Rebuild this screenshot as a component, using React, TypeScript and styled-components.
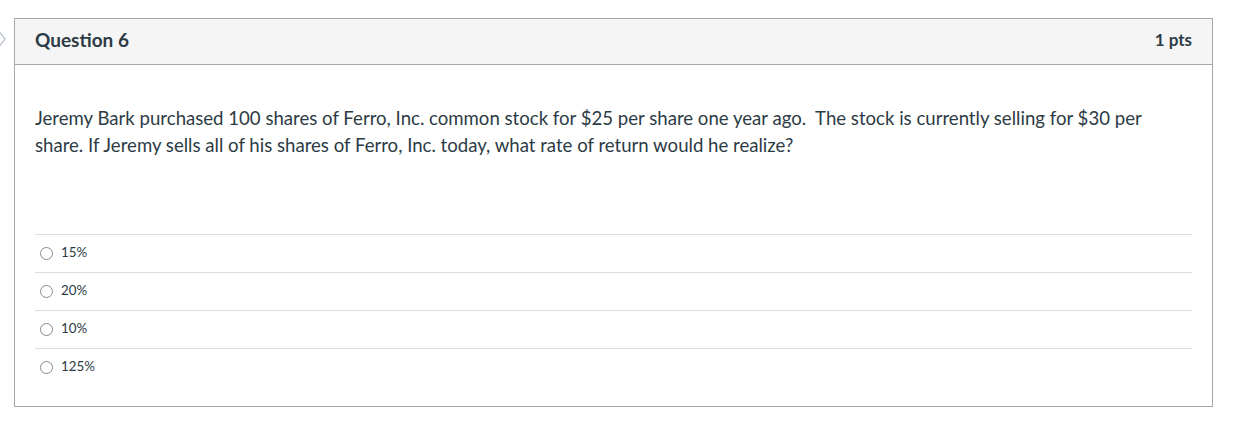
import React from "react";
import styled, { createGlobalStyle } from "styled-components";

const GlobalStyle = createGlobalStyle`
  html, body {
    margin: 0;
    padding: 0;
    background: #ffffff;
    font-family: Lato, "Liberation Sans", sans-serif;
    color: #2d3b45;
  }
`;

const Page = styled.div`
  display: flex;
  align-items: flex-start;
  padding-top: 18px;
  width: 1250px;
`;

const Marker = styled.div`
  width: 14px;
  flex: none;
  padding-top: 14px;
  display: flex;
  svg {
    display: block;
  }
`;

const Card = styled.div`
  width: 1199px;
  box-sizing: border-box;
  border: 1px solid #a8a8a8;
  background: #ffffff;
`;

const Header = styled.div`
  display: flex;
  justify-content: space-between;
  align-items: center;
  height: 46px;
  box-sizing: border-box;
  padding: 0 20px 4px 20px;
  background: #f5f5f5;
  border-bottom: 1px solid #a8a8a8;
`;

const Title = styled.h2`
  margin: 0;
  font-size: 19px;
  font-weight: 700;
  color: #2d3b45;
`;

const Points = styled.span`
  font-size: 17px;
  font-weight: 700;
  color: #2d3b45;
`;

const Body = styled.div`
  padding: 40px 20px 20px 20px;
`;

const QuestionText = styled.p`
  margin: 0 0 75px 0;
  font-size: 18.6px;
  line-height: 27px;
  color: #2d3b45;
`;

const Answers = styled.div`
  display: flex;
  flex-direction: column;
`;

const AnswerRow = styled.label`
  display: flex;
  align-items: center;
  gap: 8px;
  height: 38px;
  box-sizing: border-box;
  border-top: 1px solid #dddddd;
  padding-left: 5px;
  color: #2d3b45;
`;

const AnswerText = styled.span`
  font-size: 13.4px;
  margin-top: -4px;
`;

const Radio = styled.span`
  width: 11px;
  height: 11px;
  border: 1px solid #8a8a8a;
  border-radius: 50%;
  background: #ffffff;
  flex: none;
`;

const answers = ["15%", "20%", "10%", "125%"];

export default function App() {
  return (
    <>
      <GlobalStyle />
      <Page>
        <Marker>
          <svg width="8" height="14" viewBox="0 0 8 14">
            <polyline
              points="0,0.5 5,7 0,13.5"
              fill="none"
              stroke="#a9b6c4"
              strokeWidth="1.2"
            />
          </svg>
        </Marker>
        <Card>
          <Header>
            <Title>Question 6</Title>
            <Points>1 pts</Points>
          </Header>
          <Body>
            <QuestionText>
              Jeremy Bark purchased 100 shares of Ferro, Inc. common stock for $25 per share one year ago.&nbsp; The stock
              is currently selling for $30 per share. If Jeremy sells all of his shares of Ferro, Inc. today, what rate of
              return would he realize?
            </QuestionText>
            <Answers>
              {answers.map((a) => (
                <AnswerRow key={a}>
                  <Radio />
                  <AnswerText>{a}</AnswerText>
                </AnswerRow>
              ))}
            </Answers>
          </Body>
        </Card>
      </Page>
    </>
  );
}
